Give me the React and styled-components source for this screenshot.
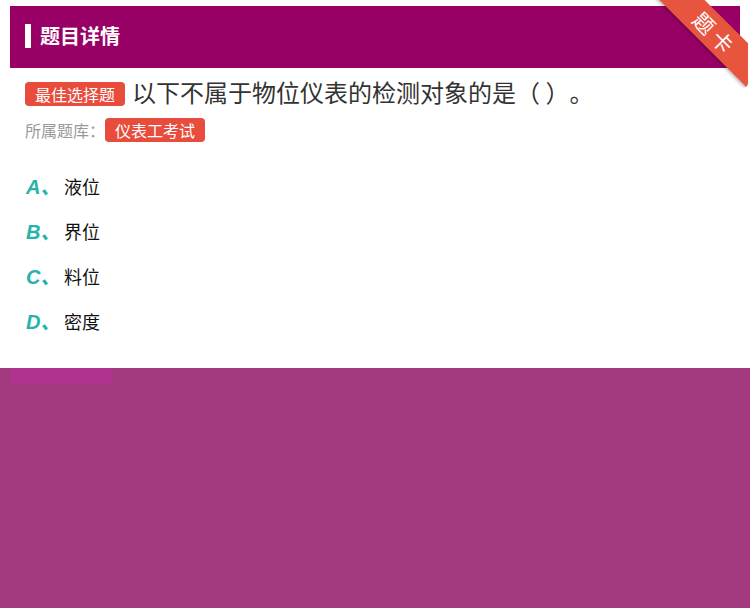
import React from "react";
import styled, { createGlobalStyle } from "styled-components";

const GlobalStyle = createGlobalStyle`
  html, body {
    margin: 0;
    padding: 0;
    background: #fff;
  }
  body {
    font-family: "Noto Sans CJK SC", "Liberation Sans", sans-serif;
  }
`;

const options = [
  { key: "A", text: "液位" },
  { key: "B", text: "界位" },
  { key: "C", text: "料位" },
  { key: "D", text: "密度" },
];

const App = () => {
  return (
    <Page>
      <GlobalStyle />
      <Card>
        <Header>
          <Title>题目详情</Title>
        </Header>
        <Ribbon>
          <Band>题卡</Band>
        </Ribbon>
        <Body>
          <Question>
            <Tag>最佳选择题</Tag>
            <span>
              以下不属于物位仪表的检测对象的是<Paren>（</Paren> <Paren>）</Paren>。
            </span>
          </Question>
          <Meta>
            <span>所属题库</span>
            <Colon>：</Colon>
            <Tag>仪表工考试</Tag>
          </Meta>
          <Options>
            {options.map((o) => (
              <Option key={o.key}>
                <Letter>{o.key}、</Letter>
                <span>{o.text}</span>
              </Option>
            ))}
          </Options>
        </Body>
      </Card>
      <Mask>
        <MaskTab />
      </Mask>
    </Page>
  );
};

const Page = styled.div`
  display: flex;
  flex-direction: column;
  min-height: 100vh;
`;

const Card = styled.div`
  position: relative;
  margin: 6px 10px 0 10px;
`;

const Header = styled.div`
  height: 62px;
  background: #990066;
  display: flex;
  align-items: center;
  padding-left: 15px;
  padding-bottom: 3px;
  box-sizing: border-box;
`;

const Title = styled.h2`
  margin: 0;
  color: #fff;
  font-size: 20px;
  font-weight: 700;
  display: flex;
  align-items: center;
  line-height: 24px;

  &::before {
    content: "";
    width: 6px;
    height: 24px;
    background: #fff;
    margin-right: 9px;
  }
`;

const Ribbon = styled.div`
  position: absolute;
  top: -6px;
  left: 630px;
  width: 108px;
  height: 88px;
  overflow: hidden;
  border-bottom-right-radius: 5px;
`;

const Band = styled.div`
  position: absolute;
  left: 2px;
  top: 24px;
  width: 160px;
  height: 32px;
  padding-right: 18px;
  box-sizing: border-box;
  transform: rotate(45deg);
  background: #e8553f;
  color: #fff;
  font-size: 21px;
  line-height: 32px;
  text-align: center;
  letter-spacing: 5px;
  box-shadow: 0 2px 3px rgba(0, 0, 0, 0.25);
`;

const Body = styled.div`
  padding: 9px 15px 0 15px;
  height: 291px;
`;

const Question = styled.div`
  display: flex;
  align-items: center;
  gap: 7px;
  font-size: 24px;
  color: #333;
  line-height: 30px;

  & > ${"span"}:first-child {
    margin-top: 3px;
  }
`;

const Paren = styled.span`
  display: inline-block;
  width: 24px;
  text-align: center;
`;

const Tag = styled.span`
  display: inline-block;
  background: #e74c3c;
  color: #fff;
  font-size: 16px;
  line-height: 24px;
  height: 24px;
  padding: 0 10px;
  border-radius: 4px;
`;

const Meta = styled.div`
  display: flex;
  align-items: center;
  margin-top: 11px;
  font-size: 16px;
  color: #999;
`;

const Colon = styled.span`
  display: inline-block;
  width: 16px;
  text-align: center;
`;

const Options = styled.div`
  margin-top: 21px;
  display: flex;
  flex-direction: column;
`;

const Option = styled.div`
  display: flex;
  align-items: center;
  height: 45px;
  font-size: 18px;
  color: #111;
`;

const Letter = styled.span`
  width: 38px;
  padding-left: 1px;
  color: #26b3a8;
  font-family: "Liberation Sans", "Noto Sans CJK SC", sans-serif;
  font-style: italic;
  font-weight: 700;
  font-size: 20px;
`;

const Mask = styled.div`
  flex: 1;
  background: #a33a80;
`;

const MaskTab = styled.div`
  margin-left: 10px;
  width: 102px;
  height: 15px;
  background: #b0338f;
`;

export default App;
